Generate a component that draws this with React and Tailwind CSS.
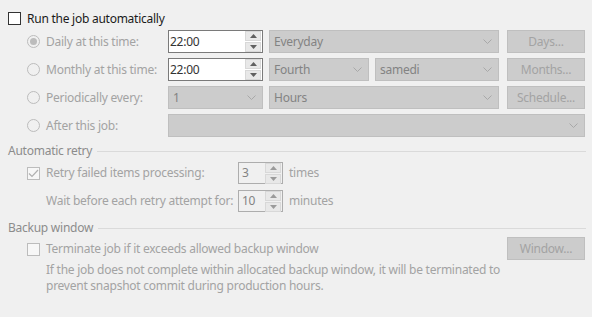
import React from "react";

const FONT = { fontFamily: '"Noto Sans", "Open Sans", sans-serif' };

function Chevron() {
  return (
    <svg width="9" height="5" viewBox="0 0 9 5" className="shrink-0">
      <path d="M0.5 0.5 L4.5 4.5 L8.5 0.5" fill="none" stroke="#a8a8a8" strokeWidth="1" />
    </svg>
  );
}

function Combo({ value, className = "" }) {
  return (
    <div
      className={`h-[23px] bg-[#cccccc] border border-[#bfbfbf] flex items-center justify-between pl-[4px] pr-[6px] text-[#838383] ${className}`}
    >
      <span>{value}</span>
      <Chevron />
    </div>
  );
}

function DisabledButton({ label }) {
  return (
    <div className="w-[78px] h-[23px] bg-[#cccccc] border border-[#bfbfbf] flex items-center justify-center text-[#a3a3a3]">
      {label}
    </div>
  );
}

function SpinArrows({ disabled }) {
  const c = disabled ? "#9a9a9a" : "#606060";
  return (
    <div className="flex flex-col gap-[1px] w-[16px]">
      <div className="h-[10px] bg-[#e8e8e8] border border-[#d8d8d8] flex items-center justify-center">
        <svg width="7" height="4" viewBox="0 0 7 4">
          <path d="M0 4 L3.5 0 L7 4 Z" fill={c} />
        </svg>
      </div>
      <div className="h-[10px] bg-[#e8e8e8] border border-[#d8d8d8] flex items-center justify-center">
        <svg width="7" height="4" viewBox="0 0 7 4">
          <path d="M0 0 L3.5 4 L7 0 Z" fill={c} />
        </svg>
      </div>
    </div>
  );
}

function TimeInput({ value }) {
  return (
    <div className="w-[95px] h-[23px] bg-white border border-[#7a7a7a] flex items-center justify-between pl-[1px] pr-[1px] text-[#333]">
      <span>{value}</span>
      <SpinArrows />
    </div>
  );
}

function NumInput({ value }) {
  return (
    <div className="w-[45px] h-[22px] bg-[#f0f0f0] border border-[#adadad] flex items-center justify-between pl-[3px] pr-[1px] text-[#838383]">
      <span>{value}</span>
      <SpinArrows disabled />
    </div>
  );
}

function Radio({ checked }) {
  return (
    <span className="w-[13px] h-[13px] rounded-full border border-[#bcbcbc] bg-[#f0f0f0] flex items-center justify-center shrink-0">
      {checked && <span className="w-[7px] h-[7px] rounded-full bg-[#bcbcbc]" />}
    </span>
  );
}

function Check({ dark, checked }) {
  return (
    <span
      className={`w-[13px] h-[13px] border shrink-0 flex items-center justify-center ${
        dark ? "border-[#333333] bg-white" : "border-[#bcbcbc] bg-[#f7f7f7]"
      }`}
    >
      {checked && (
        <svg width="11" height="9" viewBox="0 0 11 9">
          <path d="M1 4.5 L4 7.5 L10 1" fill="none" stroke="#b0b0b0" strokeWidth="1.2" />
        </svg>
      )}
    </span>
  );
}

function GroupHeader({ label }) {
  return (
    <div className="flex items-center gap-[5px] pl-[8px] pr-[6px] h-[16px] text-[#8c8c8c]">
      <span>{label}</span>
      <div className="flex-1 h-px bg-[#dadada]" />
    </div>
  );
}

function ScheduleRow({ label, checked, children }) {
  return (
    <div className="flex items-center h-[23px]">
      <div className="w-[168px] flex items-center gap-[6px] pl-[27px] text-[#a3a3a3] whitespace-nowrap">
        <Radio checked={checked} />
        <span>{label}</span>
      </div>
      <div className="flex items-center gap-[6px]">{children}</div>
    </div>
  );
}

export default function App() {
  return (
    <div
      className="w-[592px] h-[317px] bg-[#f0f0f0] text-[12px] leading-[16px] tracking-[-0.25px] overflow-hidden"
      style={FONT}
    >
      <div className="flex items-center gap-[6px] pl-[8px] pt-[11px] h-[26px] text-[#1a1a1a]">
        <Check dark />
        <span>Run the job automatically</span>
      </div>

      <div className="flex flex-col gap-[5px] mt-[4px]">
        <ScheduleRow label="Daily at this time:" checked>
          <TimeInput value="22:00" />
          <Combo value="Everyday" className="w-[230px]" />
          <div className="ml-[2px]">
            <DisabledButton label="Days..." />
          </div>
        </ScheduleRow>
        <ScheduleRow label="Monthly at this time:">
          <TimeInput value="22:00" />
          <Combo value="Fourth" className="w-[100px]" />
          <Combo value="samedi" className="w-[124px]" />
          <div className="ml-[2px]">
            <DisabledButton label="Months..." />
          </div>
        </ScheduleRow>
        <ScheduleRow label="Periodically every:">
          <Combo value="1" className="w-[95px]" />
          <Combo value="Hours" className="w-[230px]" />
          <div className="ml-[2px]">
            <DisabledButton label="Schedule..." />
          </div>
        </ScheduleRow>
        <ScheduleRow label="After this job:">
          <Combo value="" className="w-[417px]" />
        </ScheduleRow>
      </div>

      <div className="mt-[6px]">
        <GroupHeader label="Automatic retry" />
      </div>
      <div className="flex flex-col gap-[6px] mt-[3px]">
        <div className="flex items-center h-[22px] text-[#a3a3a3] whitespace-nowrap">
          <div className="w-[238px] flex items-center gap-[6px] pl-[27px]">
            <Check checked />
            <span>Retry failed items processing:</span>
          </div>
          <NumInput value="3" />
          <span className="ml-[6px]">times</span>
        </div>
        <div className="flex items-center h-[22px] text-[#a3a3a3] whitespace-nowrap">
          <div className="w-[238px] pl-[46px]">Wait before each retry attempt for:</div>
          <NumInput value="10" />
          <span className="ml-[6px]">minutes</span>
        </div>
      </div>

      <div className="mt-[8px]">
        <GroupHeader label="Backup window" />
      </div>
      <div className="flex items-start justify-between pl-[27px] pr-[7px] mt-[1px] text-[#a3a3a3]">
        <div className="flex flex-col whitespace-nowrap">
          <div className="flex items-center gap-[6px] h-[22px] mt-[1px]">
            <Check />
            <span>Terminate job if it exceeds allowed backup window</span>
          </div>
          <div className="pl-[19px] mt-[2px] leading-[16px]">
            <div>If the job does not complete within allocated backup window, it will be terminated to</div>
            <div>prevent snapshot commit during production hours.</div>
          </div>
        </div>
        <div className="h-[22px]">
          <DisabledButton label="Window..." />
        </div>
      </div>
    </div>
  );
}
